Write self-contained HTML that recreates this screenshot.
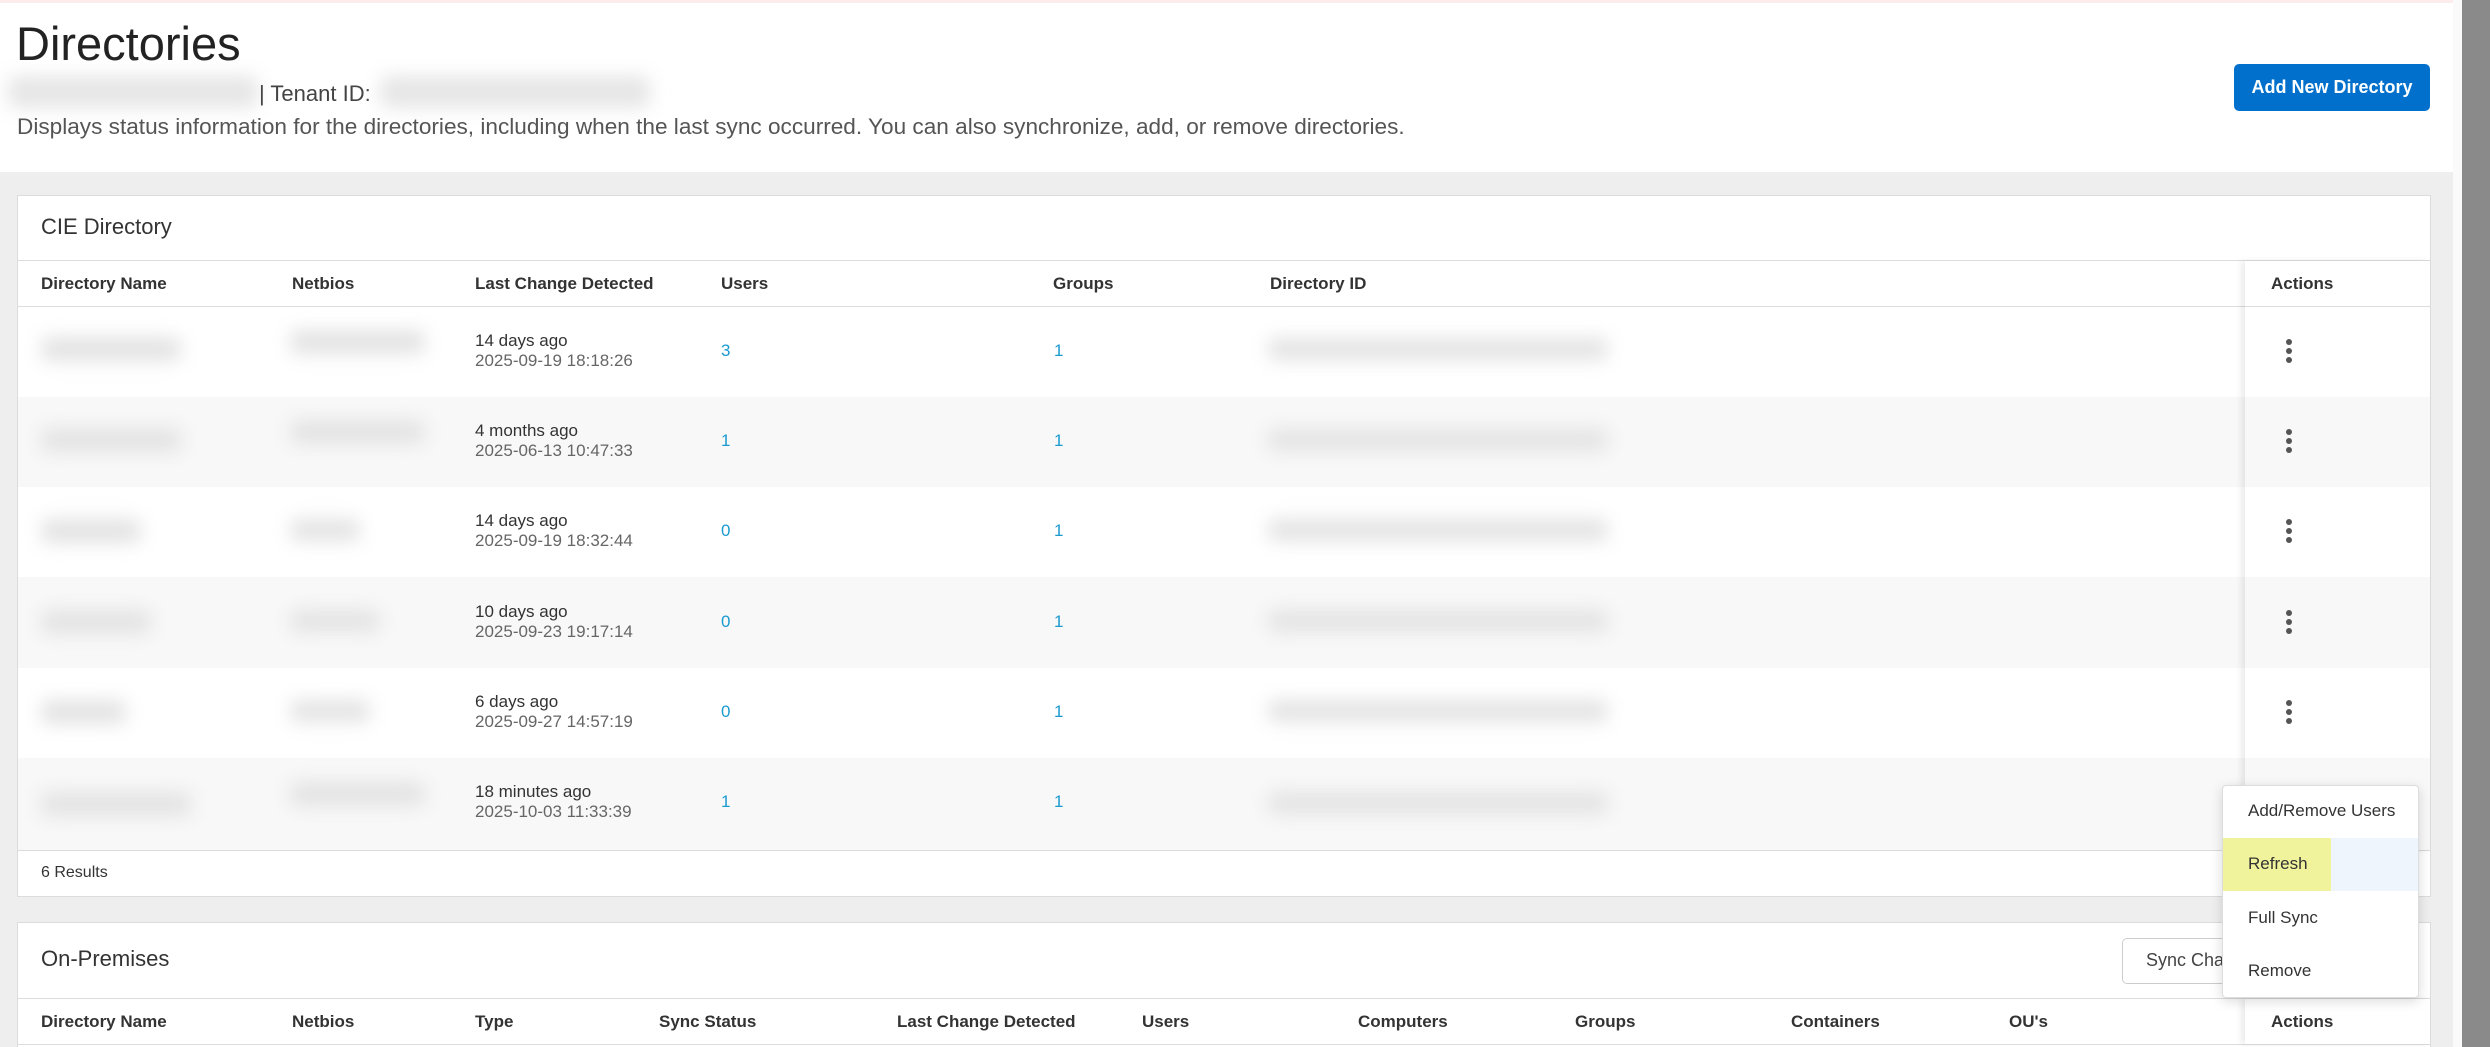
<!DOCTYPE html>
<html><head><meta charset="utf-8"><style>
*{margin:0;padding:0;box-sizing:border-box}
html,body{width:2490px;height:1047px;overflow:hidden}
body{background:#fff;font-family:"Liberation Sans",sans-serif;color:#333;position:relative}
.a{position:absolute;white-space:nowrap}
.blur{position:absolute;background:#e3e3e3;filter:blur(9px);border-radius:8px}
.hd{font-size:17px;font-weight:bold;color:#333}
.t1{font-size:17px;color:#333}
.t2{font-size:17px;color:#666}
.lnk{font-size:17px;color:#1a9bd0}
.dots{position:absolute;width:6px}
.dots i{display:block;width:6px;height:6px;border-radius:50%;background:#555;margin-bottom:3px}
</style></head><body>
<div class="a" style="left:0;top:0;width:2453px;height:3px;background:#fdecec"></div>
<div class="a" style="left:2453px;top:0;width:9px;height:1047px;background:#fafafa"></div>
<div class="a" style="left:2462px;top:0;width:28px;height:1047px;background:#8a8a8a"></div>

<div class="a" style="left:16px;top:16px;font-size:47px;color:#222">Directories</div>
<div class="blur" style="left:8px;top:76px;width:250px;height:32px;background:#e6e6e6"></div>
<div class="a" style="left:259px;top:81px;font-size:22px;color:#444">| Tenant ID:</div>
<div class="blur" style="left:380px;top:76px;width:270px;height:32px;background:#e6e6e6"></div>
<div class="a" style="left:17px;top:114px;font-size:22.6px;color:#555">Displays status information for the directories, including when the last sync occurred. You can also synchronize, add, or remove directories.</div>
<div class="a" style="left:2234px;top:64px;width:196px;height:47px;background:#0070cc;border-radius:5px;color:#fff;font-weight:bold;font-size:18px;text-align:center;line-height:47px">Add New Directory</div>

<div class="a" style="left:0;top:172px;width:2453px;height:875px;background:#eeeeee"></div>

<!-- card 1 -->
<div class="a" style="left:17px;top:195px;width:2414px;height:702px;background:#fff;border:1px solid #dcdcdc"></div>
<div class="a" style="left:41px;top:214px;font-size:22px;color:#333">CIE Directory</div>
<div class="a" style="left:18px;top:260px;width:2412px;height:1px;background:#dcdcdc"></div>
<div class="a" style="left:18px;top:306px;width:2412px;height:1px;background:#dcdcdc"></div>
<div class="a hd" style="left:41px;top:274px">Directory Name</div>
<div class="a hd" style="left:292px;top:274px">Netbios</div>
<div class="a hd" style="left:475px;top:274px">Last Change Detected</div>
<div class="a hd" style="left:721px;top:274px">Users</div>
<div class="a hd" style="left:1053px;top:274px">Groups</div>
<div class="a hd" style="left:1270px;top:274px">Directory ID</div>

<div class="a" style="left:18px;top:397px;width:2412px;height:90px;background:#f8f8f8"></div>
<div class="a" style="left:18px;top:577px;width:2412px;height:91px;background:#f8f8f8"></div>
<div class="a" style="left:18px;top:758px;width:2412px;height:92px;background:#f8f8f8"></div>
<div class="a" style="left:18px;top:850px;width:2412px;height:1px;background:#dcdcdc"></div>
<div class="a t1" style="left:41px;top:864px;font-size:16px">6 Results</div>

<div class="a" style="left:2245px;top:261px;width:185px;height:589px;box-shadow:-4px 0 6px rgba(0,0,0,0.08)"></div>
<div class="a hd" style="left:2271px;top:274px">Actions</div>

<div class="blur" style="left:41px;top:337px;width:140px;height:24px"></div><div class="blur" style="left:290px;top:330px;width:135px;height:24px"></div><div class="blur" style="left:1268px;top:338px;width:340px;height:22px"></div>
<div class="a t1" style="left:475px;top:331px">14 days ago</div><div class="a t2" style="left:475px;top:351px">2025-09-19 18:18:26</div><div class="a lnk" style="left:721px;top:341px">3</div><div class="a lnk" style="left:1054px;top:341px">1</div>
<div class="dots" style="left:2286px;top:339px"><i></i><i></i><i></i></div>

<div class="blur" style="left:41px;top:428px;width:140px;height:24px"></div><div class="blur" style="left:290px;top:420px;width:135px;height:24px"></div><div class="blur" style="left:1268px;top:429px;width:340px;height:22px"></div>
<div class="a t1" style="left:475px;top:421px">4 months ago</div><div class="a t2" style="left:475px;top:441px">2025-06-13 10:47:33</div><div class="a lnk" style="left:721px;top:431px">1</div><div class="a lnk" style="left:1054px;top:431px">1</div>
<div class="dots" style="left:2286px;top:429px"><i></i><i></i><i></i></div>

<div class="blur" style="left:41px;top:519px;width:100px;height:24px"></div><div class="blur" style="left:290px;top:519px;width:70px;height:22px"></div><div class="blur" style="left:1268px;top:519px;width:340px;height:22px"></div>
<div class="a t1" style="left:475px;top:511px">14 days ago</div><div class="a t2" style="left:475px;top:531px">2025-09-19 18:32:44</div><div class="a lnk" style="left:721px;top:521px">0</div><div class="a lnk" style="left:1054px;top:521px">1</div>
<div class="dots" style="left:2286px;top:519px"><i></i><i></i><i></i></div>

<div class="blur" style="left:41px;top:610px;width:110px;height:24px"></div><div class="blur" style="left:290px;top:610px;width:90px;height:22px"></div><div class="blur" style="left:1268px;top:610px;width:340px;height:22px"></div>
<div class="a t1" style="left:475px;top:602px">10 days ago</div><div class="a t2" style="left:475px;top:622px">2025-09-23 19:17:14</div><div class="a lnk" style="left:721px;top:612px">0</div><div class="a lnk" style="left:1054px;top:612px">1</div>
<div class="dots" style="left:2286px;top:610px"><i></i><i></i><i></i></div>

<div class="blur" style="left:41px;top:700px;width:85px;height:24px"></div><div class="blur" style="left:290px;top:700px;width:80px;height:22px"></div><div class="blur" style="left:1268px;top:700px;width:340px;height:22px"></div>
<div class="a t1" style="left:475px;top:692px">6 days ago</div><div class="a t2" style="left:475px;top:712px">2025-09-27 14:57:19</div><div class="a lnk" style="left:721px;top:702px">0</div><div class="a lnk" style="left:1054px;top:702px">1</div>
<div class="dots" style="left:2286px;top:700px"><i></i><i></i><i></i></div>

<div class="blur" style="left:41px;top:792px;width:150px;height:24px"></div><div class="blur" style="left:290px;top:782px;width:135px;height:24px"></div><div class="blur" style="left:1268px;top:792px;width:340px;height:22px"></div>
<div class="a t1" style="left:475px;top:782px">18 minutes ago</div><div class="a t2" style="left:475px;top:802px">2025-10-03 11:33:39</div><div class="a lnk" style="left:721px;top:792px">1</div><div class="a lnk" style="left:1054px;top:792px">1</div>

<!-- card 2 -->
<div class="a" style="left:17px;top:922px;width:2414px;height:125px;background:#fff;border:1px solid #dcdcdc;border-bottom:none"></div>
<div class="a" style="left:41px;top:946px;font-size:22px;color:#333">On-Premises</div>
<div class="a" style="left:18px;top:998px;width:2412px;height:1px;background:#dcdcdc"></div>
<div class="a" style="left:18px;top:1044px;width:2412px;height:1px;background:#dcdcdc"></div>
<div class="a" style="left:2122px;top:938px;width:150px;height:46px;border:1px solid #ccc;border-radius:5px;background:#fff"></div>
<div class="a t1" style="left:2146px;top:950px;font-size:18px;color:#444">Sync Changes</div>
<div class="a" style="left:2245px;top:999px;width:185px;height:45px;box-shadow:-4px 0 6px rgba(0,0,0,0.08)"></div>
<div class="a hd" style="left:41px;top:1012px">Directory Name</div>
<div class="a hd" style="left:292px;top:1012px">Netbios</div>
<div class="a hd" style="left:475px;top:1012px">Type</div>
<div class="a hd" style="left:659px;top:1012px">Sync Status</div>
<div class="a hd" style="left:897px;top:1012px">Last Change Detected</div>
<div class="a hd" style="left:1142px;top:1012px">Users</div>
<div class="a hd" style="left:1358px;top:1012px">Computers</div>
<div class="a hd" style="left:1575px;top:1012px">Groups</div>
<div class="a hd" style="left:1791px;top:1012px">Containers</div>
<div class="a hd" style="left:2009px;top:1012px">OU's</div>
<div class="a hd" style="left:2271px;top:1012px">Actions</div>

<!-- menu -->
<div class="a" style="left:2222px;top:785px;width:197px;height:213px;background:#fff;border:1px solid #ddd;border-radius:4px;box-shadow:0 3px 12px rgba(0,0,0,0.15);overflow:hidden">
<div class="a" style="left:0;top:52px;width:197px;height:53px;background:#eef5fd"></div>
<div class="a" style="left:0;top:52px;width:108px;height:53px;background:#f0f29c"></div>
<div class="a" style="left:25px;top:15px;font-size:17px;color:#333">Add/Remove Users</div>
<div class="a" style="left:25px;top:68px;font-size:17px;color:#333">Refresh</div>
<div class="a" style="left:25px;top:122px;font-size:17px;color:#333">Full Sync</div>
<div class="a" style="left:25px;top:175px;font-size:17px;color:#333">Remove</div>
</div>
</body></html>
